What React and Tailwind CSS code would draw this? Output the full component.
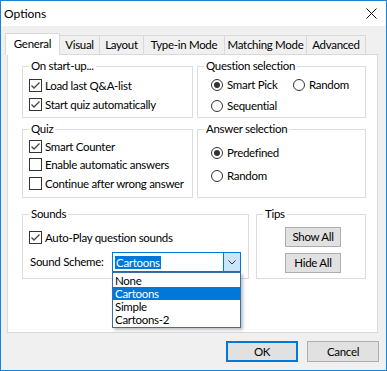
import React from "react";

const font = { fontFamily: 'Lato, "Liberation Sans", Arial, sans-serif' };

const Check = ({ checked }) => (
  <span className="w-[13px] h-[13px] border border-[#333333] bg-white flex items-center justify-center shrink-0">
    {checked && (
      <svg width="11" height="11" viewBox="0 0 11 11">
        <path d="M1.5 5.5 L4 8 L9.5 2.5" fill="none" stroke="#444444" strokeWidth="1.3" />
      </svg>
    )}
  </span>
);

const Radio = ({ checked }) => (
  <span className="w-[12px] h-[12px] rounded-full border border-[#333333] bg-white flex items-center justify-center shrink-0">
    {checked && <span className="w-[6px] h-[6px] rounded-full bg-[#333333]" />}
  </span>
);

const CheckRow = ({ checked, label, className = "" }) => (
  <div className={"flex items-center gap-[3px] h-[13px] " + className}>
    <Check checked={checked} />
    <span className="leading-none">{label}</span>
  </div>
);

const RadioRow = ({ checked, label, className = "" }) => (
  <div className={"flex items-center gap-[4px] h-[12px] " + className}>
    <Radio checked={checked} />
    <span className="leading-none">{label}</span>
  </div>
);

const Group = ({ title, className = "", children }) => (
  <div className={"relative border border-[#dcdcdc] " + className}>
    <span className="absolute -top-[8px] left-[6px] bg-white px-[2px] leading-[14px]">{title}</span>
    {children}
  </div>
);

const tabs = [
  { name: "Visual", w: "w-[40px]" },
  { name: "Layout", w: "w-[44px]" },
  { name: "Type-in Mode", w: "w-[81px]" },
  { name: "Matching Mode", w: "w-[82px]" },
  { name: "Advanced", w: "w-[59px]" },
];

export default function App() {
  return (
    <div
      className="w-[387px] h-[371px] border border-[#1883d7] bg-[#f0f0f0] flex flex-col text-[11.5px] tracking-[-0.3px] text-black overflow-hidden whitespace-nowrap"
      style={font}
    >
      <div className="h-[25px] bg-white flex items-center justify-between pl-[3px] pr-[9px] shrink-0">
        <span className="text-[12px] tracking-normal">Options</span>
        <svg width="11" height="11" viewBox="0 0 11 11">
          <path d="M0.5 0.5 L10.5 10.5 M10.5 0.5 L0.5 10.5" stroke="#111111" strokeWidth="1" />
        </svg>
      </div>

      <div className="flex items-end h-[21px] mt-[7px] ml-[4px]">
        <div className="relative z-10 w-[55px] h-[22px] -mb-px bg-white border-t border-l border-r border-[#d9d9d9] flex items-center justify-center pb-[2px]">
          General
        </div>
        {tabs.map((t) => (
          <div
            key={t.name}
            className={t.w + " h-[19px] border-t border-r border-[#d9d9d9] flex items-center justify-center"}
          >
            {t.name}
          </div>
        ))}
      </div>

      <div className="relative ml-[6px] w-[371px] h-[279px] border border-[#d9d9d9] bg-white pl-[14px] pt-[11px]">
        <div className="grid grid-cols-[171px_169px] gap-x-[4px]">
          <Group title="On start-up..." className="h-[52px] pt-[12px] pl-[6px]">
            <CheckRow checked label="Load last Q&A-list" />
            <CheckRow checked label="Start quiz automatically" className="mt-[6px]" />
          </Group>
          <Group title="Question selection" className="h-[52px] pt-[12px] pl-[13px]">
            <div className="flex">
              <RadioRow checked label="Smart Pick" className="w-[82px]" />
              <RadioRow label="Random" />
            </div>
            <RadioRow label="Sequential" className="mt-[9px]" />
          </Group>

          <Group title="Quiz" className="h-[69px] mt-[11px] pt-[10px] pl-[6px]">
            <CheckRow checked label="Smart Counter" />
            <CheckRow label="Enable automatic answers" className="mt-[5px]" />
            <CheckRow label="Continue after wrong answer" className="mt-[6px]" />
          </Group>
          <Group title="Answer selection" className="h-[69px] mt-[11px] pt-[17px] pl-[13px]">
            <RadioRow checked label="Predefined" />
            <RadioRow label="Random" className="mt-[11px]" />
          </Group>
        </div>

        <div className="flex gap-x-[7px] mt-[16px]">
          <Group title="Sounds" className="w-[227px] h-[65px] pt-[16px] pl-[6px]">
            <CheckRow checked label="Auto-Play question sounds" />
            <div className="flex items-center mt-[8px]">
              <span className="w-[83px] pl-[1px]">Sound Scheme:</span>
              <div className="relative w-[129px] h-[20px] border border-[#0078d7] bg-white flex items-center">
                <span className="ml-[2px] bg-[#0078d7] text-white px-px leading-[13px]">Cartoons</span>
                <div className="absolute right-0 top-0 bottom-0 w-[17px] bg-[#cce4f7] border-l border-[#0078d7] flex items-center justify-center">
                  <svg width="8" height="5" viewBox="0 0 8 5">
                    <path d="M0.5 0.5 L4 4 L7.5 0.5" fill="none" stroke="#333333" strokeWidth="1" />
                  </svg>
                </div>
                <div className="absolute left-[-1px] top-[19px] w-[129px] border border-[#3c6ea5] bg-white shadow-[2px_2px_3px_rgba(0,0,0,0.25)] z-20 py-px">
                  {["None", "Cartoons", "Simple", "Cartoons-2"].map((o) => (
                    <div
                      key={o}
                      className={
                        "h-[13px] leading-[13px] pl-[2px] " +
                        (o === "Cartoons" ? "bg-[#0078d7] text-white" : "")
                      }
                    >
                      {o}
                    </div>
                  ))}
                </div>
              </div>
            </div>
          </Group>
          <Group title="Tips" className="w-[110px] h-[65px] pt-[12px] pl-[28px]">
            <button className="w-[56px] h-[20px] bg-[#e1e1e1] border border-[#adadad] block">Show All</button>
            <button className="w-[56px] h-[20px] bg-[#e1e1e1] border border-[#adadad] block mt-[6px]">Hide All</button>
          </Group>
        </div>
      </div>

      <div className="flex justify-end gap-[9px] pr-[7px] mt-[8px]">
        <button className="w-[72px] h-[21px] bg-[#e1e1e1] border-2 border-[#0078d7]">OK</button>
        <button className="w-[72px] h-[21px] bg-[#e1e1e1] border border-[#adadad]">Cancel</button>
      </div>
    </div>
  );
}
